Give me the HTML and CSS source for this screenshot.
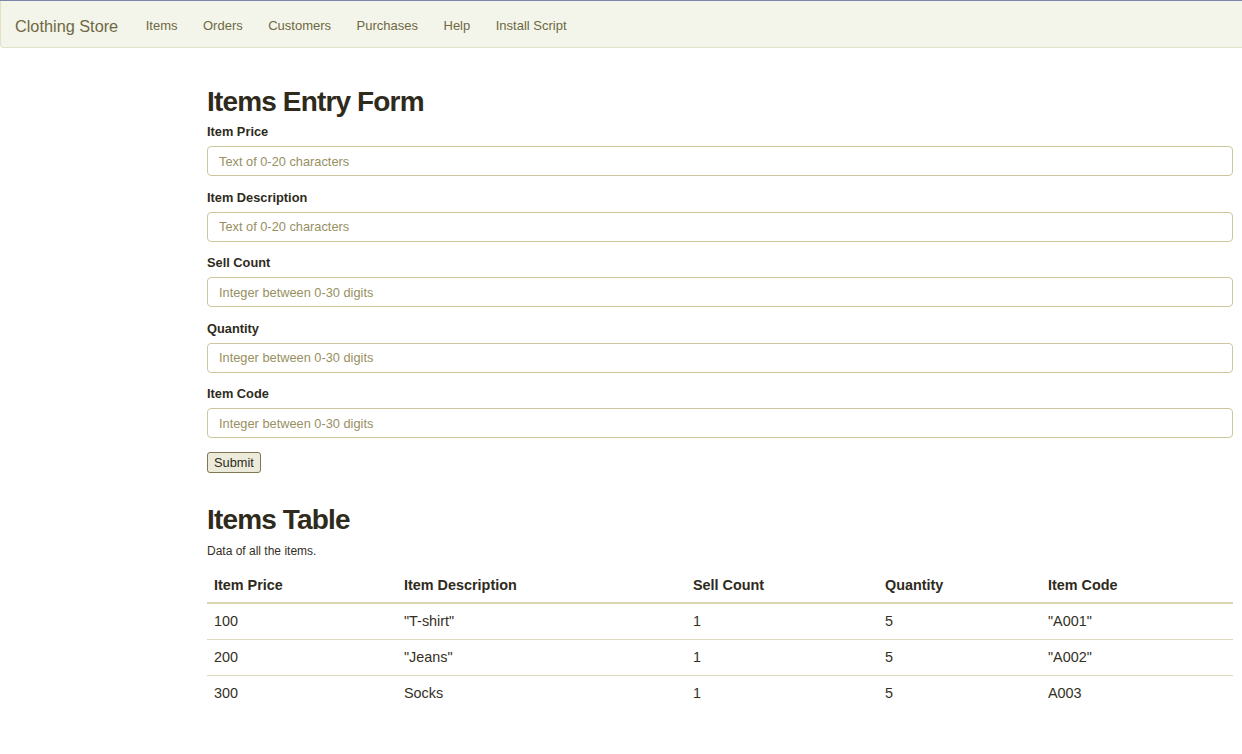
FILE: index.html
```html
<!DOCTYPE html>
<html>
<head>
<meta charset="utf-8">
<title>Clothing Store</title>
<link rel="stylesheet" href="styles.css">
</head>
<body>
<div class="topline"></div>
<nav class="navbar">
  <a class="brand" href="#">Clothing Store</a>
  <ul class="nav">
    <li><a href="#">Items</a></li>
    <li><a href="#">Orders</a></li>
    <li><a href="#">Customers</a></li>
    <li><a href="#">Purchases</a></li>
    <li><a href="#">Help</a></li>
    <li><a href="#">Install Script</a></li>
  </ul>
</nav>
<main class="content">
  <h2 class="title">Items Entry Form</h2>
  <form class="form">
    <div class="group">
      <label>Item Price</label>
      <input type="text" placeholder="Text of 0-20 characters">
    </div>
    <div class="group">
      <label>Item Description</label>
      <input type="text" placeholder="Text of 0-20 characters">
    </div>
    <div class="group">
      <label>Sell Count</label>
      <input type="text" placeholder="Integer between 0-30 digits">
    </div>
    <div class="group">
      <label>Quantity</label>
      <input type="text" placeholder="Integer between 0-30 digits">
    </div>
    <div class="group">
      <label>Item Code</label>
      <input type="text" placeholder="Integer between 0-30 digits">
    </div>
    <button type="button" class="submit">Submit</button>
  </form>
  <h2 class="title table-title">Items Table</h2>
  <p class="caption">Data of all the items.</p>
  <table class="table">
    <thead>
      <tr>
        <th class="c1">Item Price</th>
        <th class="c2">Item Description</th>
        <th class="c3">Sell Count</th>
        <th class="c4">Quantity</th>
        <th class="c5">Item Code</th>
      </tr>
    </thead>
    <tbody>
      <tr><td>100</td><td>"T-shirt"</td><td>1</td><td>5</td><td>"A001"</td></tr>
      <tr><td>200</td><td>"Jeans"</td><td>1</td><td>5</td><td>"A002"</td></tr>
      <tr><td>300</td><td>Socks</td><td>1</td><td>5</td><td>A003</td></tr>
    </tbody>
  </table>
</main>
</body>
</html>
```
FILE: styles.css
```css
* { box-sizing: border-box; }
html, body { margin: 0; padding: 0; }
body {
  font-family: "Liberation Sans", Arial, Helvetica, sans-serif;
  color: #34301f;
  background: #fff;
  font-size: 13px;
  overflow: hidden;
}
.topline {
  height: 1px;
  background: #7b87a8;
}
.navbar {
  display: flex;
  align-items: flex-start;
  height: 47px;
  padding-top: 15px;
  margin-right: -6px;
  background: #f3f5ea;
  border: 1px solid #e3e2c6;
  border-top: none;
  border-radius: 0 0 0 4px;
}
.brand {
  font-size: 16.3px;
  color: #6f6843;
  text-decoration: none;
  padding: 0 14px 0 14px;
  line-height: 20px;
}
.nav {
  display: flex;
  list-style: none;
  margin: 0;
  padding: 0;
}
.nav a {
  display: block;
  padding: 0 12.5px 0 13px;
  color: #6f6843;
  text-decoration: none;
  font-size: 13px;
  line-height: 20px;
}
.nav li:first-child a { padding-left: 13.5px; }
.content {
  padding: 38px 9px 0 207px;
}
.title {
  font-size: 28px;
  font-weight: bold;
  margin: 0 0 5px 0;
  line-height: 32px;
  color: #2f2b1c;
  letter-spacing: -0.85px;
}
.form {
  display: flex;
  flex-direction: column;
  align-items: flex-start;
}
.group {
  width: 100%;
  margin-bottom: 12.5px;
}
.group label {
  display: block;
  font-weight: bold;
  font-size: 12.8px;
  line-height: 18px;
  margin-bottom: 5px;
  color: #2f2b1c;
}
.group input {
  display: block;
  width: 100%;
  height: 30px;
  padding: 5px 11px;
  font-family: inherit;
  font-size: 12.8px;
  color: #34301f;
  border: 1px solid #cdc7a0;
  border-radius: 4px;
  background: #fff;
  outline: none;
}
.group input::placeholder {
  color: #97905f;
}
.submit {
  margin-top: 1.5px;
  height: 21px;
  padding: 0 6px;
  font-family: inherit;
  font-size: 12.8px;
  color: #2f2b1c;
  background: #eceadb;
  border: 1px solid #80764f;
  border-radius: 3px;
}
.table-title {
  margin-top: 31px;
  margin-bottom: 7px;
}
.caption {
  margin: 0 0 10px 0;
  font-size: 12px;
  line-height: 16px;
}
.table {
  width: 100%;
  border-collapse: collapse;
  font-size: 14.4px;
}
.table th {
  text-align: left;
  font-weight: bold;
  padding: 6px 7px 7px 7px;
  line-height: 20px;
  border-bottom: 2px solid #d9d4b2;
  color: #2f2b1c;
}
.table td {
  padding: 7px 7px 8px 7px;
  line-height: 20px;
  border-top: 1px solid #ddd9bd;
}
.table tbody tr:first-child td { border-top: none; }
.c1 { width: 190px; }
.c2 { width: 289px; }
.c3 { width: 192px; }
.c4 { width: 163px; }
```
